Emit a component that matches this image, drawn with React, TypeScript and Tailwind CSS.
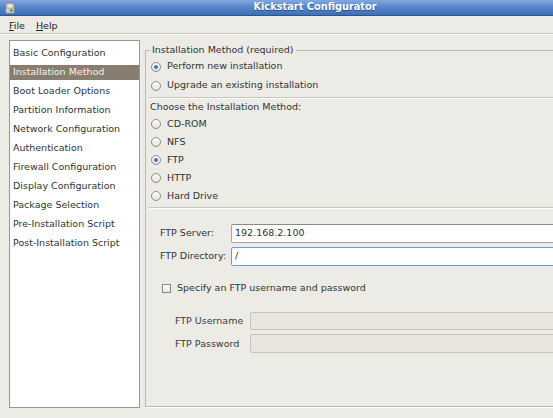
import React from "react";

const sections = [
  "Basic Configuration",
  "Installation Method",
  "Boot Loader Options",
  "Partition Information",
  "Network Configuration",
  "Authentication",
  "Firewall Configuration",
  "Display Configuration",
  "Package Selection",
  "Pre-Installation Script",
  "Post-Installation Script",
];

const methods = [
  { label: "CD-ROM", checked: false },
  { label: "NFS", checked: false },
  { label: "FTP", checked: true },
  { label: "HTTP", checked: false },
  { label: "Hard Drive", checked: false },
];

function Radio({ checked }: { checked?: boolean }) {
  return (
    <span className="w-[10px] h-[10px] rounded-full border border-[#8e8a84] bg-gradient-to-b from-white to-[#e4e1dc] flex items-center justify-center shrink-0">
      {checked && <span className="w-[4px] h-[4px] rounded-full bg-[#3f76c8]" />}
    </span>
  );
}

function RadioRow({ label, checked, h }: { label: string; checked?: boolean; h: string }) {
  return (
    <div className={`${h} flex items-center pl-[2px] gap-[6px]`}>
      <Radio checked={checked} />
      <span>{label}</span>
    </div>
  );
}

function Separator({ className = "" }: { className?: string }) {
  return <div className={`h-[2px] border-t border-[#c9c4bc] border-b border-b-white ${className}`} />;
}

function AppIcon() {
  return (
    <svg width="10" height="12" viewBox="0 0 10 12">
      <rect x="0.5" y="0.5" width="9" height="11" rx="2" fill="#c9ccce" stroke="#7d8286" />
      <rect x="2" y="2" width="6" height="4" fill="#e9ecee" stroke="#8a8f93" strokeWidth="0.6" />
      <circle cx="6.5" cy="8.5" r="1.6" fill="#5aa83a" />
    </svg>
  );
}

export default function App() {
  return (
    <div className="w-[553px] h-[418px] overflow-hidden bg-[#edebe6]">
      <div className="w-[630px] h-[418px] flex flex-col font-['DejaVu_Sans',sans-serif] text-[9.5px] text-[#2e3436]">
        {/* title bar */}
        <div className="h-[16px] shrink-0 relative flex items-center justify-center bg-gradient-to-b from-[#81a9de] via-[#5585c8] to-[#3d6fb8] border-b border-[#2c558f]">
          <span className="absolute left-[5px] top-[2px]">
            <AppIcon />
          </span>
          <span className="font-bold text-[9.8px] text-white [text-shadow:0_1px_0_#2a4f85]">
            Kickstart Configurator
          </span>
        </div>

        {/* menu bar */}
        <div className="h-[17px] shrink-0 flex items-center gap-[11px] pl-[9px] pt-[4px] text-[#222]">
          <span>
            <span className="underline underline-offset-1">F</span>ile
          </span>
          <span>
            <span className="underline underline-offset-1">H</span>elp
          </span>
        </div>
        <Separator className="shrink-0" />

        {/* body */}
        <div className="flex-1 flex gap-[5px] pl-[9px] pr-[10px] pt-[5px] pb-[10px]">
          <div className="w-[131px] shrink-0 bg-white border border-[#9d988f] pt-[2.5px]">
            {sections.map((s, i) => (
              <div key={s} className="h-[19px] py-[2px]">
                <div
                  className={`h-[15px] flex items-center pl-[3px] ${
                    i === 1 ? "bg-[#887d71] text-[#f4f2ee]" : ""
                  }`}
                >
                  {s}
                </div>
              </div>
            ))}
          </div>

          <fieldset className="flex-1 mt-[4px] mb-[1px] border border-[#bdb8af] pl-[3px] shadow-[1px_1px_0_#fff]">
            <legend className="ml-[1px] px-[2px] h-[12px] leading-[12px]">Installation Method (required)</legend>
            <div className="mt-[1px]">
              <RadioRow h="h-[19px]" label="Perform new installation" checked />
              <RadioRow h="h-[19px]" label="Upgrade an existing installation" />
            </div>
            <Separator className="mt-[2px]" />
            <div className="h-[16px] flex items-center pl-[1px]">Choose the Installation Method:</div>
            {methods.map((m) => (
              <RadioRow key={m.label} h="h-[18px]" label={m.label} checked={m.checked} />
            ))}
            <Separator className="mt-[2px]" />

            <div className="mt-[15px] flex flex-col gap-[4px] pl-[11px]">
              <div className="flex items-center">
                <span className="w-[71px] shrink-0">FTP Server:</span>
                <div className="flex-1 h-[19px] bg-white border border-[#aaa59c] border-t-[#8f8a82] rounded-[2px] flex items-center pl-[3px]">
                  192.168.2.100
                </div>
              </div>
              <div className="flex items-center">
                <span className="w-[71px] shrink-0">FTP Directory:</span>
                <div className="flex-1 h-[19px] bg-white border border-[#6b9ad4] rounded-[2px] flex items-center pl-[3px]">
                  /
                </div>
              </div>
            </div>

            <div className="mt-[15px] flex items-center gap-[6px] pl-[13px]">
              <span className="w-[9px] h-[9px] border border-[#8b8780] bg-gradient-to-b from-white to-[#eceae6] shrink-0" />
              <span>Specify an FTP username and password</span>
            </div>

            <div className="mt-[17px] flex flex-col gap-[4px] pl-[26px] text-[#3a3a3a]">
              <div className="flex items-center">
                <span className="w-[75px] shrink-0">FTP Username</span>
                <div className="flex-1 h-[18px] bg-[#e9e6e0] border border-[#c6c1b9] rounded-[2px]" />
              </div>
              <div className="flex items-center">
                <span className="w-[75px] shrink-0">FTP Password</span>
                <div className="flex-1 h-[19px] bg-[#e9e6e0] border border-[#c6c1b9] rounded-[2px]" />
              </div>
            </div>
          </fieldset>
        </div>
      </div>
    </div>
  );
}
